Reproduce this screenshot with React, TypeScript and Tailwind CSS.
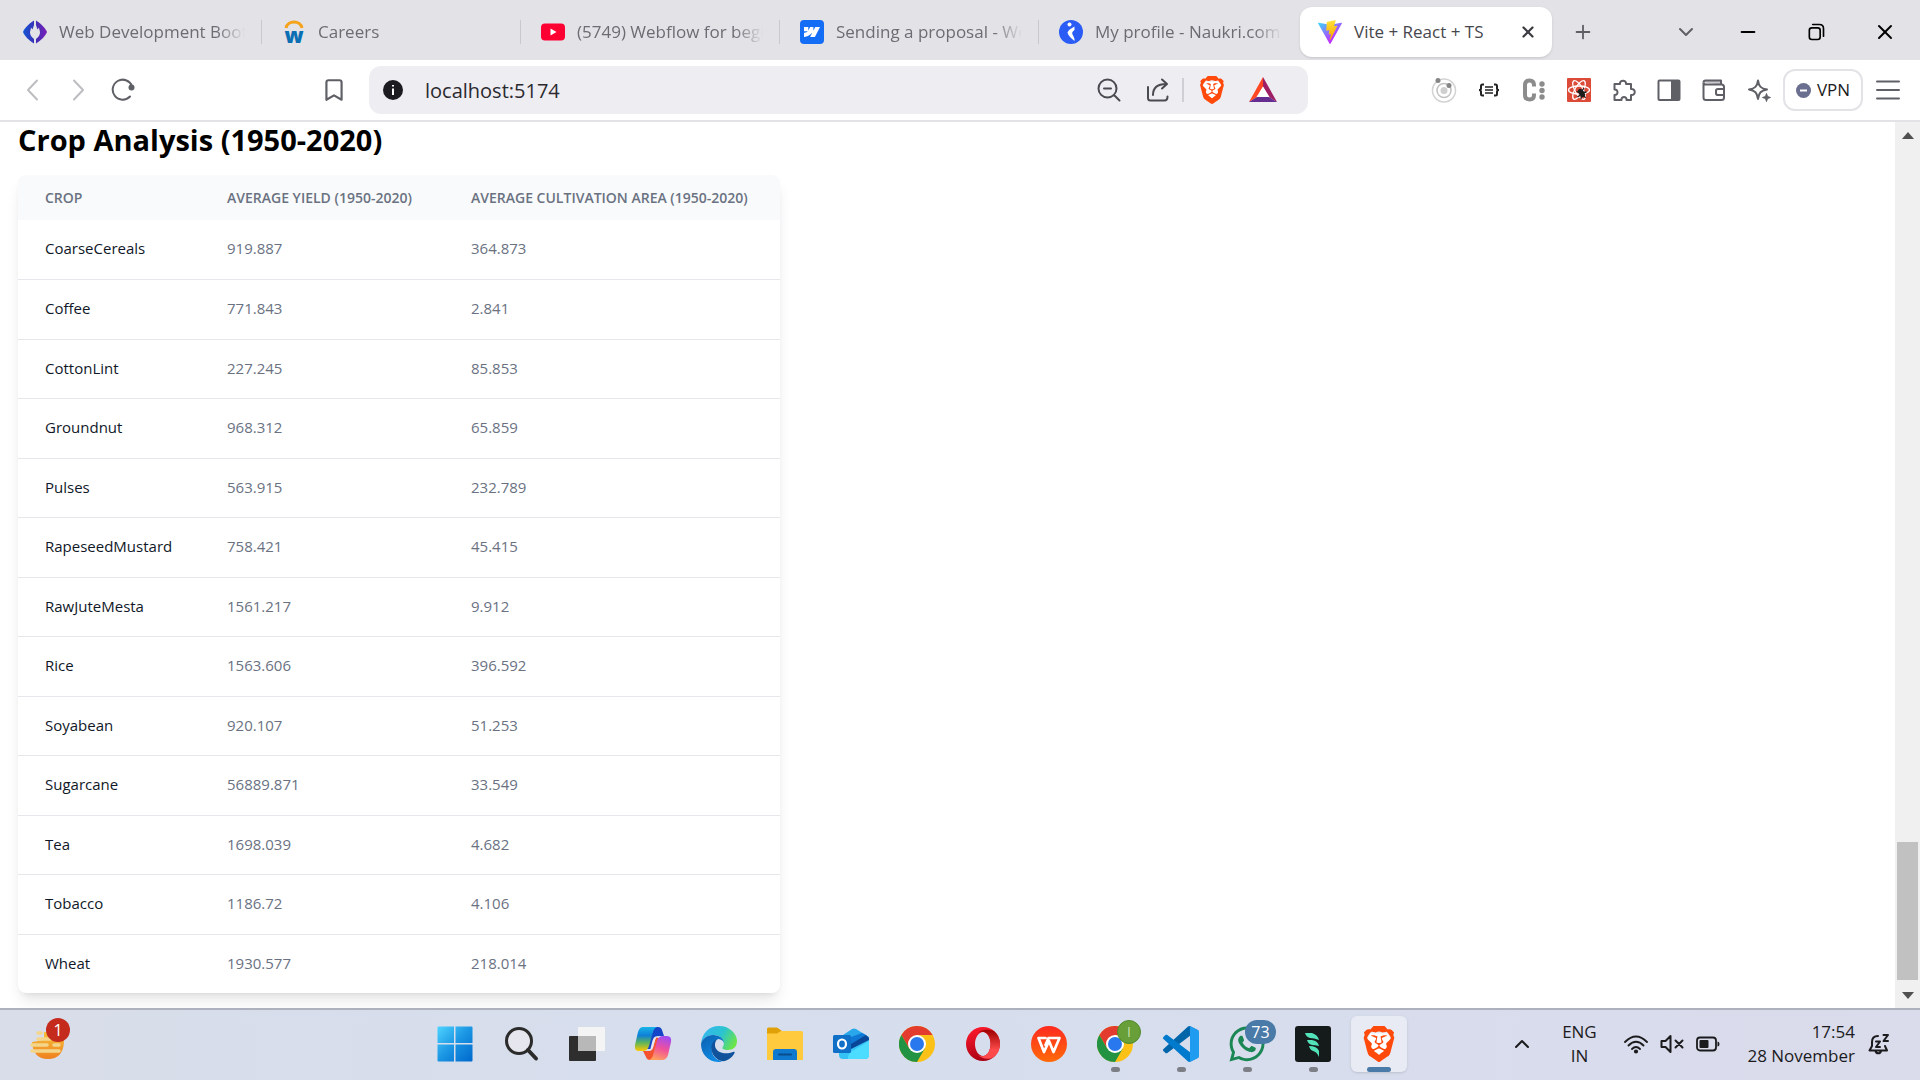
import React from "react";
import type { ReactNode } from "react";
import { Bookmark, ChevronDown, ChevronUp, Minus, Plus, X } from "lucide-react";
import { SiBrave, SiWebflow } from "react-icons/si";
import { FaWhatsapp } from "react-icons/fa";

const crops: [string, string, string][] = [
  ["CoarseCereals", "919.887", "364.873"],
  ["Coffee", "771.843", "2.841"],
  ["CottonLint", "227.245", "85.853"],
  ["Groundnut", "968.312", "65.859"],
  ["Pulses", "563.915", "232.789"],
  ["RapeseedMustard", "758.421", "45.415"],
  ["RawJuteMesta", "1561.217", "9.912"],
  ["Rice", "1563.606", "396.592"],
  ["Soyabean", "920.107", "51.253"],
  ["Sugarcane", "56889.871", "33.549"],
  ["Tea", "1698.039", "4.682"],
  ["Tobacco", "1186.72", "4.106"],
  ["Wheat", "1930.577", "218.014"],
];

/* ---------- favicons ---------- */

const BootcampIcon = () => (
  <svg width="24" height="24" viewBox="0 0 24 24">
    <defs>
      <linearGradient id="bc" x1="0" x2="1">
        <stop offset="0" stopColor="#1257d6" />
        <stop offset="0.5" stopColor="#3b2fb5" />
        <stop offset="1" stopColor="#7a1fb8" />
      </linearGradient>
    </defs>
    <path
      fill="url(#bc)"
      d="M11 .5C6 3.500 1.500 8 0 12c1.500 4 6 8.500 11 11.500v-4.500C8.500 17 7 15 7 12.500c0-2 1-3 1-5l1.500 2L11 5zM13 .5c5 3 9.500 7.500 11 11.500-1.500 4-6 8.500-11 11.500v-4.500c2.500-2 4-4 4-6.500 0-2-1-3-1-5l-1.500 2L13 5z"
    />
  </svg>
);

const CareersIcon = () => (
  <svg width="24" height="24" viewBox="0 0 24 24" className="overflow-visible">
    <path d="M4 8C5.500 0 18.500 0 20 8" fill="none" stroke="#f5a31a" strokeWidth="3" />
    <text x="12" y="23" textAnchor="middle" fontSize="21" fontWeight="800" fill="#0b6fb3" fontFamily="Open Sans, sans-serif">
      w
    </text>
  </svg>
);

const YoutubeIcon = () => (
  <svg width="24" height="24" viewBox="0 0 24 24">
    <rect x="0" y="3.500" width="24" height="17" rx="4" fill="#ff0033" />
    <path d="M9.500 8.500v7l6-3.500z" fill="#fff" />
  </svg>
);

const WebflowIcon = () => (
  <span className="flex size-6 items-center justify-center rounded-sm bg-[#146ef5] text-white">
    <SiWebflow size={16} />
  </span>
);

const NaukriIcon = () => (
  <svg width="24" height="24" viewBox="0 0 24 24">
    <circle cx="12" cy="12" r="12" fill="#2b5cf6" />
    <circle cx="10.500" cy="4.500" r="2" fill="#fff" />
    <path d="M15.500 6.500v3.500c-2.500 1.500-3 3-1.500 5.500 1.200 2 1.700 3.500 1.500 5.500-3-2.500-6.500-5.500-7-8.500 1-2.500 3.500-4 7-6z" fill="#fff" />
  </svg>
);

const ViteIcon = () => (
  <svg width="24" height="24" viewBox="0 0 256 257">
    <defs>
      <linearGradient id="v1" x1="-.8%" x2="57.600%" y1="7.600%" y2="78.400%">
        <stop offset="0" stopColor="#41D1FF" />
        <stop offset="1" stopColor="#BD34FE" />
      </linearGradient>
      <linearGradient id="v2" x1="43.400%" x2="50.300%" y1="2.200%" y2="89%">
        <stop offset="0" stopColor="#FFEA83" />
        <stop offset="0.08" stopColor="#FFDD35" />
        <stop offset="1" stopColor="#FFA800" />
      </linearGradient>
    </defs>
    <path fill="url(#v1)" d="M255.153 37.938L134.897 252.976c-2.483 4.440-8.862 4.466-11.382.048L.875 37.958c-2.746-4.814 1.371-10.646 6.827-9.670l120.385 21.517a6.537 6.537 0 0 0 2.322-.004l117.867-21.483c5.438-.991 9.574 4.796 6.877 9.620Z" />
    <path fill="url(#v2)" d="M185.432.063L96.440 17.501a3.268 3.268 0 0 0-2.634 3.014l-5.474 92.456a3.268 3.268 0 0 0 3.997 3.378l24.777-5.718c2.318-.535 4.413 1.507 3.936 3.838l-7.361 36.047c-.495 2.426 1.782 4.500 4.151 3.780l15.304-4.649c2.372-.720 4.652 1.360 4.150 3.788l-11.698 56.621c-.732 3.542 3.979 5.473 5.943 2.437l1.313-2.028l72.516-144.720c1.215-2.423-.880-5.186-3.540-4.672l-25.505 4.922c-2.396.462-4.435-1.770-3.759-4.114l16.646-57.705c.677-2.350-1.370-4.583-3.769-4.113Z" />
  </svg>
);

/* ---------- toolbar drawings ---------- */

const Line = ({ d, color = "#5f6066", width = 2, size = 24 }: { d: string; color?: string; width?: number; size?: number }) => (
  <svg width={size} height={size} viewBox="0 0 24 24" fill="none" stroke={color} strokeWidth={width} strokeLinecap="round" strokeLinejoin="round">
    <path d={d} />
  </svg>
);

const ReloadIcon = () => (
  <svg width="24" height="24" viewBox="0 0 24 24" fill="none" stroke="#5f6066" strokeWidth="2" strokeLinecap="round">
    <path d="M19 18.500A10 10 0 1 1 21 8" />
    <circle cx="20.500" cy="9.500" r="3" fill="#5f6066" stroke="none" />
  </svg>
);

const BraveShield = ({ size }: { size: number }) => (
  <svg width={size} height={size} viewBox="0 0 24 24">
    <path d="M6 5h12l2 5-3 9-5 4-5-4-3-9z" fill="#fff" />
    <SiBrave size={24} color="#ff4a0c" />
  </svg>
);

const BatIcon = () => (
  <svg width="28" height="26" viewBox="0 0 28 26">
    <path d="M14 0 0 25l8-5 6-10z" fill="#ff4724" />
    <path d="M14 0v10l6 10 8 5z" fill="#9e1f63" />
    <path d="M0 25h28l-8-5H8z" fill="#662d91" />
    <path d="M14 9.500 7.500 20h13z" fill="#fff" />
  </svg>
);

const OrbitIcon = () => (
  <svg width="26" height="26" viewBox="0 0 26 26" fill="none">
    <circle cx="13" cy="13.500" r="11.500" stroke="#d3d3d3" strokeWidth="1.500" />
    <circle cx="13" cy="13.500" r="7" stroke="#c2c2c2" strokeWidth="1.500" />
    <circle cx="13" cy="13.500" r="3.500" fill="#cfcfcf" />
    <circle cx="7" cy="3.500" r="2.500" fill="#858585" />
    <circle cx="18" cy="8.500" r="2.500" fill="#858585" />
  </svg>
);

const JsonIcon = () => (
  <svg width="24" height="24" viewBox="0 0 24 24" fill="none" stroke="#222" strokeWidth="2">
    <path d="M7 6.500H5.500Q4 6.500 4 8v2.500Q4 12 2 12q2 0 2 1.500V16q0 1.500 1.500 1.500H7M17 6.500h1.500Q20 6.500 20 8v2.500q0 1.500 2 1.500-2 0-2 1.500V16q0 1.500-1.500 1.500H17" />
    <path d="M8 9h8M8 12h8M8 15h8" strokeWidth="1.500" />
  </svg>
);

const ColorIcon = () => (
  <svg width="24" height="24" viewBox="0 0 24 24">
    <path d="M12 8.500V7Q12 2.500 7.500 2.500T3 7v10q0 4.500 4.500 4.500T12 17v-1.500" fill="none" stroke="#8c8c8c" strokeWidth="4" />
    <circle cx="20" cy="6" r="2.700" fill="#8c8c8c" />
    <circle cx="20" cy="12.500" r="2.700" fill="#8c8c8c" />
    <circle cx="20" cy="19" r="2.700" fill="#8c8c8c" />
  </svg>
);

const ReactDevIcon = () => (
  <svg width="24" height="24" viewBox="0 0 24 24" fill="none" stroke="#fff" strokeWidth="1.300">
    <rect width="24" height="24" rx="1" fill="#dc4a38" stroke="none" />
    <ellipse cx="12" cy="12" rx="10.500" ry="4" />
    <ellipse cx="12" cy="12" rx="10.500" ry="4" transform="rotate(60 12 12)" />
    <ellipse cx="12" cy="12" rx="10.500" ry="4" transform="rotate(120 12 12)" />
    <ellipse cx="14.500" cy="15" rx="2.700" ry="4.500" fill="#1c1c1c" stroke="none" transform="rotate(-35 14.500 15)" />
    <path d="M9.500 13.500l3 1M10.500 19l3-2M17 10l-2 3M19.500 14l-3 .5M18.500 20l-1.500-2.500M14 21l.5-3" stroke="#1c1c1c" />
  </svg>
);

const PuzzleIcon = () => (
  <Line d="M2.500 6H8c-.8-4.500 6.800-4.500 6 0h5v5c5-.8 5 6.800 0 6v5h-4.500c.5-4-5.500-4-5 0H2.500v-5c4 .3 4-5.800 0-5.500z" />
);

const SidebarIcon = () => (
  <svg width="24" height="24" viewBox="0 0 24 24">
    <rect x="1.500" y="2.500" width="21" height="19.500" rx="1" fill="none" stroke="#5f6066" strokeWidth="2" />
    <rect x="14" y="2" width="9" height="20" fill="#5f6066" />
  </svg>
);

const WalletIcon = () => (
  <svg width="24" height="24" viewBox="0 0 24 24" fill="none" stroke="#5f6066" strokeWidth="2" strokeLinejoin="round">
    <path d="M1.500 4.500q0-2 2-2H19v4" fill="#c9c9cc" />
    <path d="M1.500 4.500v15q0 2.500 2.500 2.500h15.500q2.500 0 2.500-2.500V9q0-2.500-2.500-2.500H4q-2.500 0-2.500-2" />
    <path d="M22 11h-6q-2 0-2 1.800v2.400q0 1.800 2 1.800h6" />
  </svg>
);

const SparkIcon = () => (
  <svg width="24" height="24" viewBox="0 0 24 24">
    <path d="M11 2.500c.8 6 3 8 9 9-6 1-8.200 3-9 9.500-.8-6.500-3-8.500-9-9.500 6-1 8.200-3 9-9z" fill="none" stroke="#5f6066" strokeWidth="2" strokeLinejoin="round" />
    <path d="M19.500 15.500l1 3 3 1-3 1-1 3-1-3-3-1 3-1z" fill="#5f6066" stroke="#5f6066" />
  </svg>
);

/* ---------- taskbar drawings ---------- */

const WindowsIcon = () => (
  <svg width="36" height="36" viewBox="0 0 36 36">
    <defs>
      <linearGradient id="win" x1="0" y1="0" x2="1" y2="1">
        <stop offset="0" stopColor="#4fd3ff" />
        <stop offset="0.5" stopColor="#1a95e3" />
        <stop offset="1" stopColor="#0068cc" />
      </linearGradient>
    </defs>
    <path fill="url(#win)" d="M1.500.5H17V17H.5V1.500q0-1 1-1zM18.500.5h16q1 0 1 1V17h-17zM.5 18.500H17v17H1.500q-1 0-1-1zM18.500 18.500h17v16q0 1-1 1h-16z" />
  </svg>
);

const SearchIcon = () => (
  <svg width="36" height="36" viewBox="0 0 36 36" fill="none" stroke="#2b2b2b">
    <circle cx="16" cy="15" r="12.500" strokeWidth="3" fill="#e6e6ee" />
    <path d="M25 24l8 8.500" strokeWidth="4" strokeLinecap="round" />
  </svg>
);

const TaskViewIcon = () => (
  <svg width="38" height="36" viewBox="0 0 38 36">
    <rect x="1" y="10" width="27" height="25" rx="1" fill="#2e2e2e" />
    <rect x="10" y="1" width="27" height="24" rx="1" fill="#f4f4f5" />
    <path d="M10 10h18v15H10z" fill="#b8b8b8" />
  </svg>
);

const CopilotIcon = () => (
  <svg width="38" height="36" viewBox="0 0 38 36">
    <defs>
      <linearGradient id="cp1" x1="0" y1="0" x2="0" y2="1">
        <stop offset="0" stopColor="#18b4e8" />
        <stop offset="0.35" stopColor="#0f7fd8" />
        <stop offset="0.65" stopColor="#5cb55c" />
        <stop offset="1" stopColor="#ffc800" />
      </linearGradient>
      <linearGradient id="cp2" x1="0.600" y1="0" x2="0.300" y2="1">
        <stop offset="0" stopColor="#a34bf0" />
        <stop offset="0.5" stopColor="#f0529a" />
        <stop offset="1" stopColor="#ffa25c" />
      </linearGradient>
    </defs>
    <path d="M20 1h4q3 0 4 3l2 6h-5q-4 0-5 4l-3 9h-4z" fill="#1444c8" />
    <path d="M9 25h6q3 0 4-3l3-11 4 2-6 18q-1 3-4 3-3 0-4-3z" fill="#f4532e" />
    <path d="M9 1h14q-3 1-4 5l-4 14q-1.500 5-6 5H5q-5 0-4-6L4 6q1.500-5 5-5z" fill="url(#cp1)" />
    <path d="M29 10h4q5 0 4 6l-3 13q-1.500 5-6 5H15q3-1 4-5l4-14q1.500-5 6-5z" fill="url(#cp2)" />
    <path d="M21.500 10.500q-2 .5-3 4L16 24.500q2-.5 3-3.500l2-7q1-3 3-3.500z" fill="#e9e6f2" />
  </svg>
);

const EdgeIcon = () => (
  <svg width="36" height="36" viewBox="0 0 36 36">
    <defs>
      <linearGradient id="ed1" x1="0" y1="0.200" x2="1" y2="0.600">
        <stop offset="0" stopColor="#35b6f2" />
        <stop offset="0.55" stopColor="#2bc4cf" />
        <stop offset="1" stopColor="#6be547" />
      </linearGradient>
      <linearGradient id="ed2" x1="0" y1="0" x2="0.600" y2="1">
        <stop offset="0" stopColor="#0b5fae" />
        <stop offset="1" stopColor="#0f8ce6" />
      </linearGradient>
    </defs>
    <path d="M0 18C1 7 8 0 18 0c11 0 18 8 18 15 0 6-4 9-9 9-4 0-6-1-5.500-2.500C25 17 22 9 12 9 6 9 1 13 0 18z" fill="url(#ed1)" />
    <path d="M0 18C1 13 6 9 12 9c7 0 11 4 11 8-1-3-4-4-6-4-5 2-7 8-6 13 1 5 5 8 10 9.500Q19 36 17 36C7 35.500 0 28 0 18z" fill="url(#ed2)" />
    <path d="M17 13c-6 1-8 8-6 13 2 6 8 10 13 9 5-1.500 8-5 9.500-8 .5-1-.5-1.500-1.500-1C24 29.500 13 26 14 18q.5-4 3-5z" fill="#10529c" />
  </svg>
);

const FolderIcon = () => (
  <svg width="36" height="34" viewBox="0 0 36 34">
    <path d="M0 2q0-1.500 1.500-1.500h8q1 0 2 1L15 4v3H0z" fill="#e0a008" />
    <path d="M0 6.500h10L14 4h20.500Q36 4 36 5.500V33H0z" fill="#ffca3d" />
    <path d="M6 33V25q0-3 3-3h18q3 0 3 3v8z" fill="#0f78cf" />
    <rect x="11" y="26.500" width="14" height="2" rx="1" fill="#0a4c8c" />
  </svg>
);

const OutlookIcon = () => (
  <svg width="36" height="32" viewBox="0 0 36 32">
    <path d="M7 9 19 1q2-1 4 0l13 8v6H7z" fill="#28a8ea" />
    <path d="M18 9 29 5l4 2-15 12z" fill="#0f78d4" />
    <path d="M18 16l15-9 3 3v4L18 24z" fill="#0a4698" />
    <path d="M6 22l12-1 18-9v15q0 4-4 4H10q-4 0-4-4z" fill="#35c3f5" />
    <path d="M15 29q1-5 6-7l15-9v14q0 4-4 4H15z" fill="#4cdcff" />
    <rect x="0" y="7" width="18" height="18" rx="1.500" fill="#1070c8" />
    <ellipse cx="9" cy="16" rx="4" ry="4.500" fill="none" stroke="#fff" strokeWidth="2.200" />
  </svg>
);

const ChromeIcon = () => (
  <svg width="36" height="36" viewBox="0 0 36 36">
    <circle cx="18" cy="18" r="18" fill="#fbc116" />
    <path d="M18 9h15.600A18 18 0 0 0 2.400 9l7.800 13.500z" fill="#e33b2e" />
    <path d="M2.400 9A18 18 0 0 0 18 36l7.800-13.500H10.200z" fill="#229342" />
    <circle cx="18" cy="18" r="9" fill="#fff" />
    <circle cx="18" cy="18" r="7" fill="#2a78ee" />
  </svg>
);

const OperaIcon = () => (
  <svg width="36" height="36" viewBox="0 0 36 36">
    <defs>
      <linearGradient id="op1" x1="0.200" y1="0" x2="0.500" y2="1">
        <stop offset="0" stopColor="#ff1b2d" />
        <stop offset="1" stopColor="#a70014" />
      </linearGradient>
      <linearGradient id="op2" x1="0.500" y1="0" x2="0.500" y2="1">
        <stop offset="0" stopColor="#9c0000" />
        <stop offset="0.7" stopColor="#ff4b4b" />
        <stop offset="1" stopColor="#ff4b4b" />
      </linearGradient>
    </defs>
    <path fillRule="evenodd" fill="url(#op1)" d="M18 1a17 17 0 1 0 0 34 17 17 0 0 0 0-34zm0 5c4 0 7.500 5 7.500 12S22 30 18 30s-8-5-8-12 4-12 8-12z" />
    <path fill="url(#op2)" d="M13 7c5-5 12-3 16-2a17 17 0 0 1 0 26c-5 3-12 2-16-2 7 4 12.500-2 12.500-11S20 3 13 7z" />
  </svg>
);

const WpsIcon = () => (
  <svg width="36" height="36" viewBox="0 0 36 36">
    <defs>
      <linearGradient id="wps" x1="0" y1="0" x2="0" y2="1">
        <stop offset="0" stopColor="#ff2a1f" />
        <stop offset="1" stopColor="#ff6a0a" />
      </linearGradient>
    </defs>
    <circle cx="18" cy="18" r="18" fill="url(#wps)" />
    <path d="M14.500 12H7.500l5.500 14 5-11 4.500 11 6-14H17.500l-3 7" fill="none" stroke="#fff" strokeWidth="2.700" strokeLinejoin="round" strokeLinecap="round" />
  </svg>
);

const VsCodeIcon = () => (
  <svg width="36" height="36" viewBox="0 0 100 100">
    <path fill="#0065A9" d="M96.461 10.796L75.857.876C73.472-.273 70.622.212 68.750 2.083L1.299 63.583c-1.815 1.654-1.812 4.511.004 6.162l5.510 5.009c1.485 1.350 3.722 1.450 5.321.237L93.361 13.370C96.086 11.303 100 13.246 100 16.667v-.240c0-2.400-1.375-4.590-3.539-5.631Z" />
    <path fill="#007ACC" d="M96.461 89.204l-20.604 9.920c-2.385 1.149-5.235.665-7.107-1.207L1.299 36.417c-1.815-1.654-1.812-4.511.004-6.162l5.510-5.009c1.485-1.350 3.722-1.450 5.321-.237L93.361 86.630C96.086 88.697 100 86.754 100 83.333v.240c0 2.400-1.375 4.589-3.539 5.631Z" />
    <path fill="#1F9CF0" d="M75.858 99.126c-2.386 1.148-5.236.663-7.108-1.209C71.056 100.223 75 98.590 75 95.328V4.672C75 1.410 71.056-.223 68.750 2.083 70.622.211 73.472-.274 75.858.874l20.601 9.907C98.623 11.822 100 14.011 100 16.413v67.174c0 2.402-1.377 4.592-3.541 5.633Z" />
  </svg>
);

const WingIcon = () => (
  <svg width="36" height="36" viewBox="0 0 36 36">
    <rect width="36" height="36" rx="3" fill="#151a1b" />
    <g fill="#52e3b8">
      <path d="M10 7h7q6 2 7 7-5-2-9-2-4-1-5-5z" />
      <path d="M12 14h5q6 1 7 6-4-1-7-1-4-1-5-5z" />
      <path d="M14 20q8 0 10 5v6q-2-5-6-6-3-1-4-5z" />
    </g>
  </svg>
);

const WeatherIcon = () => (
  <svg width="36" height="32" viewBox="0 0 36 32">
    <defs>
      <linearGradient id="sun" x1="0" y1="0" x2="0" y2="1">
        <stop offset="0" stopColor="#f7c23a" />
        <stop offset="1" stopColor="#ef7f1f" />
      </linearGradient>
    </defs>
    <path d="M2 14q1 17 16 17t16-17q0-6-4-10H14v8z" fill="url(#sun)" />
    <g stroke="#f3d68c" strokeWidth="3.500" strokeLinecap="round">
      <path d="M8 5h3M8 11h12M2 17h15M24 17h5M2 23h27" />
    </g>
  </svg>
);

const WifiIcon = () => (
  <svg width="24" height="24" viewBox="0 0 24 24" fill="none" stroke="#1b1b1d" strokeWidth="1.800" strokeLinecap="round">
    <path d="M1 10q11-11 22 0M4.500 13.500q7.500-7.500 15 0M8 17q4-4 8 0" />
    <circle cx="12" cy="19.500" r="1.200" fill="#1b1b1d" />
  </svg>
);

const MuteIcon = () => (
  <Line color="#1b1b1d" width={2} d="M1.500 9v6h4l5 5V4l-5 5zM15.500 8.500l7 7M22.500 8.500l-7 7" />
);

const BatteryIcon = () => (
  <svg width="24" height="24" viewBox="0 0 24 24">
    <rect x="1" y="5.500" width="19" height="13" rx="3" fill="none" stroke="#1b1b1d" strokeWidth="1.800" />
    <rect x="3.500" y="8" width="9" height="8" rx="1" fill="#1b1b1d" />
    <path d="M21.500 9.500q2 0 2 2.500t-2 2.500z" fill="#1b1b1d" />
  </svg>
);

const BellIcon = () => (
  <Line
    color="#1b1b1d"
    width={2}
    d="M11 4C6.500 4 5 7 5 10v4l-2.500 4.500H20L18 14M8.500 19c.5 3 5 3 5.500 0M9 9.500h4L9 15h4M16.500 3H21l-4.500 6H21"
  />
);

/* ---------- browser chrome ---------- */

const tabs: { title: string; icon: ReactNode }[] = [
  { title: "Web Development Bootcamp", icon: <BootcampIcon /> },
  { title: "Careers", icon: <CareersIcon /> },
  { title: "(5749) Webflow for beginners", icon: <YoutubeIcon /> },
  { title: "Sending a proposal - Webflow", icon: <WebflowIcon /> },
  { title: "My profile - Naukri.com", icon: <NaukriIcon /> },
];

function IconButton({ label, className, children }: { label: string; className: string; children: ReactNode }) {
  return (
    <button type="button" aria-label={label} className={`flex shrink-0 items-center justify-center ${className}`}>
      {children}
    </button>
  );
}

function TabStrip() {
  return (
    <div className="flex h-[60px] items-center bg-[#e3e2e7] pt-[3px] pl-[3px]">
      {tabs.map((t, i) => (
        <button
          key={t.title}
          type="button"
          className={`flex h-6 w-[259px] min-w-0 items-center gap-3 pr-4 pl-5 text-left text-[17px] leading-6 text-[#6c6d73] ${i < 4 ? "border-r border-[#c9c8ce]" : ""}`}
        >
          <span className="shrink-0">{t.icon}</span>
          <span className="min-w-0 flex-1 overflow-hidden whitespace-nowrap [mask-image:linear-gradient(to_right,black_85%,transparent)]">
            {t.title}
          </span>
        </button>
      ))}
      <div className="ml-0.5 flex h-[50px] w-[252px] shrink-0 items-center rounded-xl bg-white pr-3 pl-[18px] shadow-sm">
        <button type="button" className="flex min-w-0 flex-1 items-center gap-3 text-left text-[17px] leading-6 whitespace-nowrap text-[#46474c]">
          <ViteIcon />
          Vite + React + TS
        </button>
        <IconButton label="Close tab" className="size-6">
          <X size={18} strokeWidth={3} color="#3c3d42" />
        </IconButton>
      </div>
      <IconButton label="New tab" className="ml-[15px] size-8">
        <Plus size={22} strokeWidth={2} color="#5f6066" />
      </IconButton>
      <div className="ml-auto flex items-center">
        <IconButton label="Search tabs" className="w-14">
          <ChevronDown size={24} strokeWidth={2} color="#5f6066" />
        </IconButton>
        <IconButton label="Minimize" className="w-[68px]">
          <Minus size={22} strokeWidth={2} color="#000" />
        </IconButton>
        <IconButton label="Restore" className="w-[68px]">
          <Line color="#000" size={20} d="M7 7H14Q17 7 17 10V18Q17 21 14 21H7Q4 21 4 18V10Q4 7 7 7M8 3H16Q21 3 21 8V17" width={2} />
        </IconButton>
        <IconButton label="Close window" className="w-[70px]">
          <X size={24} strokeWidth={2} color="#000" />
        </IconButton>
      </div>
    </div>
  );
}

const extensions: { label: string; icon: ReactNode }[] = [
  { label: "Orbit", icon: <OrbitIcon /> },
  { label: "JSON formatter", icon: <JsonIcon /> },
  { label: "Color picker", icon: <ColorIcon /> },
  { label: "React developer tools", icon: <ReactDevIcon /> },
  { label: "Extensions", icon: <PuzzleIcon /> },
  { label: "Sidebar", icon: <SidebarIcon /> },
  { label: "Wallet", icon: <WalletIcon /> },
  { label: "Assistant", icon: <SparkIcon /> },
];

function Toolbar() {
  return (
    <div className="flex h-[62px] items-center border-b-2 border-[#e3e2e7] bg-white pr-[9px] pl-2.5">
      <IconButton label="Back" className="w-[45px]">
        <Line color="#bdbdc2" d="M16 2.500 7 12l9 9.500" />
      </IconButton>
      <IconButton label="Forward" className="w-[45px]">
        <Line color="#bdbdc2" d="M8 2.500 17 12l-9 9.500" />
      </IconButton>
      <IconButton label="Reload" className="w-[45px]">
        <ReloadIcon />
      </IconButton>
      <IconButton label="Bookmark this page" className="ml-[167px] w-11">
        <Bookmark size={26} strokeWidth={2} color="#5f6066" />
      </IconButton>
      <div className="ml-[13px] flex h-12 min-w-0 flex-1 items-center rounded-xl bg-[#eeedf2] pr-[18px] pl-3.5">
        <svg width="20" height="20" viewBox="0 0 20 20" className="shrink-0">
          <circle cx="10" cy="10" r="10" fill="#1c1b20" />
          <path d="M10 8.500V15M10 5v1.500" stroke="#fff" strokeWidth="2" />
        </svg>
        <input
          aria-label="Address"
          defaultValue="localhost:5174"
          className="ml-[22px] min-w-0 flex-1 bg-transparent pt-0.5 text-[20px] leading-7 text-[#2a2a2f] outline-none"
        />
        <div className="flex items-center">
          <IconButton label="Zoom" className="w-[50px]">
            <Line color="#4a4b50" d="M10.500 1.500a9 9 0 1 0 0 18 9 9 0 1 0 0-18M17 17l5.500 5.500M7 10.500h7" />
          </IconButton>
          <IconButton label="Share" className="w-[50px] border-r-2 border-[#d0cfd6]">
            <Line color="#4a4b50" d="M2 9v11q0 2.500 2.500 2.500h14q3 0 3-4M7 17C7 9 12 6 20 6M16 1.500l5 4.500-5 4.500" />
          </IconButton>
          <IconButton label="Brave Shields" className="ml-1 w-12">
            <BraveShield size={28} />
          </IconButton>
          <IconButton label="Rewards" className="w-[54px]">
            <BatIcon />
          </IconButton>
        </div>
      </div>
      <div className="ml-[113px] flex items-center">
        {extensions.map((e) => (
          <IconButton key={e.label} label={e.label} className="w-[45px]">
            {e.icon}
          </IconButton>
        ))}
      </div>
      <button
        type="button"
        className="ml-0.5 flex h-[42px] w-20 shrink-0 items-center justify-center gap-1.5 rounded-xl border-2 border-[#e3e2e7] text-[17px] text-[#1c1b20]"
      >
        <svg width="15" height="15" viewBox="0 0 15 15">
          <circle cx="7.500" cy="7.500" r="7.500" fill="#6b6f8f" />
          <path d="M4 7.500h7" stroke="#fff" strokeWidth="2" />
        </svg>
        VPN
      </button>
      <IconButton label="Menu" className="ml-0.5 w-[46px]">
        <Line d="M1 3.500h22M1 12h22M1 20.500h22" />
      </IconButton>
    </div>
  );
}

/* ---------- page ---------- */

function CropAnalysis() {
  return (
    <main className="min-w-0 flex-1 overflow-hidden bg-white px-[18px]">
      <h1 className="pb-[17px] text-[29px] leading-9 font-bold text-black">Crop Analysis (1950-2020)</h1>
      <div className="w-fit overflow-hidden rounded-lg bg-white shadow-lg">
        <table className="text-left text-[15px] leading-5">
          <thead>
            <tr className="h-[45px] bg-gray-50 text-sm leading-4 text-gray-500 uppercase">
              <th className="w-[182px] px-[27px] font-semibold">Crop</th>
              <th className="w-[244px] px-[27px] font-semibold whitespace-nowrap">Average Yield (1950-2020)</th>
              <th className="w-[336px] px-[27px] font-semibold whitespace-nowrap">Average Cultivation Area (1950-2020)</th>
            </tr>
          </thead>
          <tbody>
            {crops.map(([crop, cropYield, area]) => (
              <tr key={crop} className="h-[59px] border-b border-gray-200 last:border-b-0 even:h-[60px]">
                <th scope="row" className="px-[27px] pb-0.5 font-medium text-gray-900">
                  {crop}
                </th>
                <td className="px-[27px] pb-0.5 text-gray-500">{cropYield}</td>
                <td className="px-[27px] pb-0.5 text-gray-500">{area}</td>
              </tr>
            ))}
          </tbody>
        </table>
      </div>
    </main>
  );
}

function ScrollBar() {
  return (
    <div aria-hidden="true" className="flex w-[25px] shrink-0 flex-col items-center bg-[#f1f0f1]">
      <svg width="12" height="28" viewBox="0 0 12 28">
        <path d="M0 17h12l-6-7z" fill="#505050" />
      </svg>
      <div className="flex w-full flex-1 flex-col items-center justify-end">
        <div className="h-[138px] w-[21px] bg-[#c1c1c1]" />
      </div>
      <svg width="12" height="28" viewBox="0 0 12 28">
        <path d="M0 12h12l-6 7z" fill="#505050" />
      </svg>
    </div>
  );
}

/* ---------- taskbar ---------- */

const apps: { label: string; icon: ReactNode; running?: boolean; badge?: string }[] = [
  { label: "Start", icon: <WindowsIcon /> },
  { label: "Search", icon: <SearchIcon /> },
  { label: "Task view", icon: <TaskViewIcon /> },
  { label: "Copilot", icon: <CopilotIcon /> },
  { label: "Edge", icon: <EdgeIcon /> },
  { label: "File Explorer", icon: <FolderIcon /> },
  { label: "Outlook", icon: <OutlookIcon /> },
  { label: "Chrome", icon: <ChromeIcon /> },
  { label: "Opera", icon: <OperaIcon /> },
  { label: "WPS Office", icon: <WpsIcon /> },
  { label: "Chrome profile", icon: <ChromeIcon />, running: true, badge: "I" },
  { label: "Visual Studio Code", icon: <VsCodeIcon />, running: true },
  { label: "WhatsApp", icon: <FaWhatsapp size={40} color="#1a8754" />, running: true, badge: "73" },
  { label: "Compass", icon: <WingIcon />, running: true },
];

function TaskBar() {
  return (
    <footer className="flex h-[72px] items-center border-t-2 border-[#adb1bd] bg-linear-to-r from-[#d8dde9] via-[#d6deee] to-[#dadbeb] pb-0.5 text-[17px] leading-6 text-[#1b1b1d]">
      <div className="flex flex-[9] pl-[30px]">
        <button type="button" aria-label="Widgets" className="relative">
          <WeatherIcon />
          <span className="absolute -top-2.5 left-4 flex size-6 items-center justify-center rounded-full bg-[#c42b1c] text-base leading-6 text-white">
            1
          </span>
        </button>
      </div>
      <nav aria-label="Taskbar" className="flex">
        {apps.map((a) => (
          <button key={a.label} type="button" aria-label={a.label} className="relative flex h-14 w-[66px] items-center justify-center">
            {a.icon}
            {a.badge === "73" && (
              <span className="absolute top-1 left-[31px] flex h-6 w-[31px] items-center justify-center rounded-full bg-[#4a7aa8] text-base leading-6 text-white">
                73
              </span>
            )}
            {a.badge === "I" && (
              <span className="absolute top-1 left-[35px] flex size-6 items-center justify-center rounded-full border border-[#4f8a2a] bg-[#689f38] text-sm leading-5 text-[#c5dfae]">
                I
              </span>
            )}
            {a.running && <span className="absolute bottom-0 left-[29px] h-[5px] w-[9px] rounded-full bg-[#7d7f87]" />}
          </button>
        ))}
        <button
          type="button"
          aria-label="Brave"
          className="relative mx-[5px] flex size-14 items-center justify-center rounded-md bg-[#e9ebf4] shadow-sm"
        >
          <BraveShield size={36} />
          <span className="absolute bottom-0 left-4 h-[5px] w-6 rounded-full bg-[#4a7aa8]" />
        </button>
      </nav>
      <div className="flex flex-[11] items-center justify-end pr-[29px]">
        <IconButton label="Hidden icons" className="w-12">
          <ChevronUp size={24} strokeWidth={2} />
        </IconButton>
        <button type="button" className="w-[66px] text-center">
          ENG
          <br />
          IN
        </button>
        <button type="button" aria-label="Quick settings" className="ml-3 flex items-center gap-3">
          <WifiIcon />
          <MuteIcon />
          <BatteryIcon />
        </button>
        <button type="button" className="ml-[27px] text-right whitespace-nowrap">
          17:54
          <br />
          28 November
        </button>
        <IconButton label="Notifications" className="ml-3">
          <BellIcon />
        </IconButton>
      </div>
    </footer>
  );
}

export default function App() {
  return (
    <div className="flex h-screen flex-col overflow-hidden bg-white font-['Open_Sans','Noto_Sans',sans-serif]">
      <TabStrip />
      <Toolbar />
      <div className="flex min-h-0 flex-1">
        <CropAnalysis />
        <ScrollBar />
      </div>
      <TaskBar />
    </div>
  );
}
